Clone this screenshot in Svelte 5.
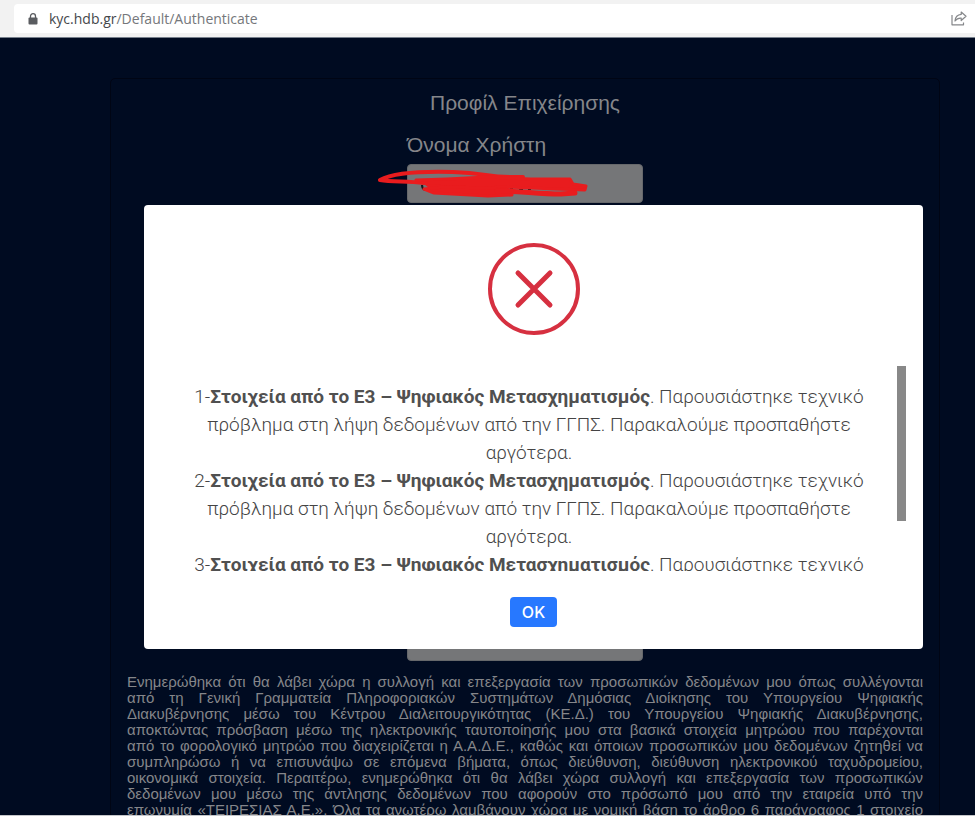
<script lang="ts">
  let username = $state('');
  let extra = $state('');
  let open = $state(true);

  const errors = [1, 2, 3];
  const source = 'Στοιχεία από το Ε3 – Ψηφιακός Μετασχηματισμός';
  const reason =
    'Παρουσιάστηκε τεχνικό πρόβλημα στη λήψη δεδομένων από την ΓΓΠΣ. Παρακαλούμε προσπαθήστε αργότερα.';

  const consent = [
    'Ενημερώθηκα ότι θα λάβει χώρα η συλλογή και επεξεργασία των προσωπικών δεδομένων μου όπως συλλέγονται',
    'από τη Γενική Γραμματεία Πληροφοριακών Συστημάτων Δημόσιας Διοίκησης του Υπουργείου Ψηφιακής',
    'Διακυβέρνησης μέσω του Κέντρου Διαλειτουργικότητας (ΚΕ.Δ.) του Υπουργείου Ψηφιακής Διακυβέρνησης,',
    'αποκτώντας πρόσβαση μέσω της ηλεκτρονικής ταυτοποίησής μου στα βασικά στοιχεία μητρώου που παρέχονται',
    'από το φορολογικό μητρώο που διαχειρίζεται η Α.Α.Δ.Ε., καθώς και όποιων προσωπικών μου δεδομένων ζητηθεί να',
    'συμπληρώσω ή να επισυνάψω σε επόμενα βήματα, όπως διεύθυνση, διεύθυνση ηλεκτρονικού ταχυδρομείου,',
    'οικονομικά στοιχεία. Περαιτέρω, ενημερώθηκα ότι θα λάβει χώρα συλλογή και επεξεργασία των προσωπικών',
    'δεδομένων μου μέσω της άντλησης δεδομένων που αφορούν στο πρόσωπό μου από την εταιρεία υπό την',
    'επωνυμία «ΤΕΙΡΕΣΙΑΣ Α.Ε.». Όλα τα ανωτέρω λαμβάνουν χώρα με νομική βάση το άρθρο 6 παράγραφος 1 στοιχείο'
  ];
</script>

<div class="browser">
  <header>
    <div class="address">
      <svg class="lock" viewBox="0 0 10 12" aria-hidden="true">
        <path d="M2.5 5V3.2a2.5 2.5 0 0 1 5 0V5" fill="none" stroke="#5a5c60" stroke-width="1.3" />
        <rect x="0.5" y="4.6" width="9" height="7" rx="1" fill="#5a5c60" />
      </svg>
      <span class="url"><b>kyc.hdb.gr</b>/Default/Authenticate</span>
      <button class="share" aria-label="Share">
        <svg viewBox="0 0 16 15" aria-hidden="true">
          <path
            d="M1 4v9.800h11.500v-2.300M10.200 1l4.800 4.300-4.800 4.200V7.200C7.600 7 5.600 7.800 4 10c.3-3.700 2.500-6.300 6.200-6.600z"
            fill="none"
            stroke="#85878a"
            stroke-width="1.200"
            stroke-linejoin="round"
          />
        </svg>
      </button>
    </div>
  </header>

  <main>
    <form class="card">
      <h1>Προφίλ Επιχείρησης</h1>
      <div class="fields">
        <div class="field">
          <label for="username">Όνομα Χρήστη</label>
          <input id="username" type="text" bind:value={username} />
          <svg class="scribble" viewBox="0 0 214 30" aria-hidden="true">
            <path d="M45 17q0 4 3 5M133 21h3M142 21h4M151 21h3" fill="none" stroke="#15171c" stroke-width="2" />
            <g fill="#e91c1e" stroke="#e91c1e" stroke-linecap="round" stroke-linejoin="round">
              <path
                fill="none"
                stroke-width="4"
                d="M3 12C16 5 40 3 76 4s34 6 70 5M3 12c12 2 26 1 44 3"
              />
              <path
                stroke-width="3"
                d="M39 12l31-1 40-2 43 2 40 0 3 5 13 2-1 4-29-1-49-2-28 1-50-2-4-3z"
              />
              <path
                stroke-width="3"
                d="M47 21l20-2 46 1 22 2v5l-24 1-54-3z"
              />
              <path fill="none" stroke-width="5" d="M120 23c24 0 40 3 64 3l14-1" />
            </g>
          </svg>
        </div>
        <input type="text" aria-label="extra" bind:value={extra} />
      </div>
      <p class="consent">
        {#each consent as line}{line}<br />{/each}
      </p>
    </form>

    {#if open}
      <div class="overlay">
        <div class="modal" role="alertdialog" aria-modal="true" aria-label={source}>
          <svg class="error-icon" viewBox="0 0 92 92" aria-hidden="true">
            <g fill="none" stroke="#d63040" stroke-linecap="round">
              <circle cx="46" cy="46" r="44" stroke-width="4" />
              <path d="M30 30l32 32M62 30L30 62" stroke-width="5" />
            </g>
          </svg>
          <div class="scroller">
            <div class="messages">
              {#each errors as n}
                <div>{n}-<strong>{source}</strong>. {reason}</div>
              {/each}
            </div>
            <div class="thumb"></div>
          </div>
          <button class="ok" onclick={() => (open = false)}>OK</button>
        </div>
      </div>
    {/if}
  </main>
</div>

<style>
  :global(body) {
    margin: 0;
  }
  .browser {
    display: flex;
    flex-direction: column;
    height: 100vh;
    overflow: hidden;
    font-family: 'Liberation Sans', Arial, sans-serif;
  }
  header {
    padding: 4px 0 4px 14px;
    background: #f2f2f2;
    border-bottom: 1px solid #77808c;
  }
  .address {
    display: flex;
    align-items: center;
    height: 29px;
    padding: 0 8px 0 14px;
    background: #fff;
    border-radius: 4px 0 0 4px;
  }
  .lock {
    width: 10px;
    height: 12px;
    margin-right: 11px;
  }
  .url {
    flex: 1;
    font: 14px 'Open Sans', sans-serif;
    color: #75777b;
  }
  .url b {
    font-weight: 400;
    color: #45474b;
  }
  .share {
    display: flex;
    padding: 0;
    border: none;
    background: none;
  }
  .share svg {
    width: 16px;
    height: 15px;
  }
  main {
    position: relative;
    flex: 1;
    min-height: 0;
    overflow: hidden;
    padding: 40px 35px 0 110px;
    background: #000b21;
    border-bottom: 1px solid #c4c6ca;
  }
  .card {
    padding: 0 16px;
    border: 1px solid #000514;
    border-radius: 5px;
    color: #85868a;
  }
  h1 {
    margin: 12px 0 18px;
    font-size: 21px;
    font-weight: 400;
    line-height: 24px;
    text-align: center;
  }
  .fields {
    display: flex;
    flex-direction: column;
    gap: 419px;
    width: 236px;
    margin: 0 auto;
  }
  .field {
    position: relative;
    display: flex;
    flex-direction: column;
    gap: 7px;
  }
  label {
    font-size: 21px;
    line-height: 24px;
  }
  input {
    box-sizing: border-box;
    width: 100%;
    height: 39px;
    padding: 6px 12px;
    border: 1px solid #66686b;
    border-radius: 4px;
    background: #757678;
    font-size: 16px;
  }
  .scribble {
    position: absolute;
    left: -30px;
    top: 35px;
    width: 214px;
    height: 30px;
  }
  .consent {
    margin: 13px 0 0;
    font-size: 15px;
    line-height: 16px;
    text-align: justify;
    text-align-last: justify;
  }
  .overlay {
    position: absolute;
    inset: 0;
    display: flex;
    align-items: center;
    padding: 0 52px 0 144px;
  }
  .modal {
    display: flex;
    flex: 1;
    flex-direction: column;
    align-items: center;
    padding: 38px 17px 22px;
    border-radius: 4px;
    background: #fff;
  }
  .error-icon {
    width: 92px;
    height: 92px;
  }
  .scroller {
    display: flex;
    align-self: stretch;
    height: 205px;
    margin: 31px 0 26px;
  }
  .messages {
    flex: 1;
    overflow-y: auto;
    scrollbar-width: none;
    box-sizing: border-box;
    padding: 17px 26px;
    color: #444;
    font: 300 19px/28px Roboto, sans-serif;
    text-align: center;
  }
  .messages strong {
    font-weight: 700;
    color: #505050;
  }
  .thumb {
    width: 9px;
    height: 155px;
    background: #888;
  }
  .ok {
    height: 30px;
    padding: 0 12px;
    border: none;
    border-radius: 4px;
    background: #2778ff;
    color: #fff;
    font: 500 16px Inter, sans-serif;
  }
</style>
